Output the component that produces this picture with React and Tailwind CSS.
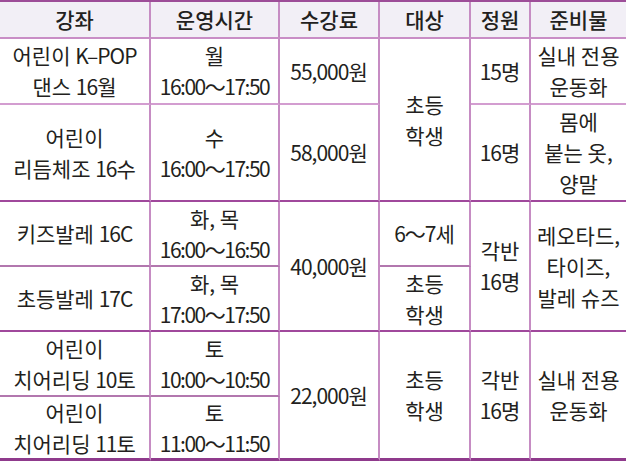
import React from 'react';

const FONT = { fontFamily: '"Noto Sans CJK KR", "Noto Sans", sans-serif' };

// line colours taken from the print scan
const V = 'border-r-2 border-r-[#c68cc3]';
const B_LIGHT = 'border-b-2 border-b-[#d39dd0]';
const B_MID = 'border-b-2 border-b-[#b277ae]';
const B_DARK = 'border-b-2 border-b-[#a0489c]';
const B_END = 'border-b-[3px] border-b-[#8f3a8c]';

const Cell = ({ children, className = '', last = false }) => (
  <div
    className={`flex items-center justify-center text-center leading-[31px] ${last ? '' : V} ${className}`}
  >
    <div>{children}</div>
  </div>
);

const Num = ({ children }) => <span className="tracking-[-1px]">{children}</span>;

const Time = ({ day, time }) => (
  <>
    {day}
    <br />
    <span className="tracking-[-1.5px]">{time}</span>
  </>
);

export default function App() {
  const headers = ['강좌', '운영시간', '수강료', '대상', '정원', '준비물'];

  return (
    <div className="w-[626px] h-[461px] bg-white overflow-hidden" style={FONT}>
      <div className="grid grid-cols-[151px_129px_100px_91px_60px_95px] grid-rows-[37px_66px_97px_65px_65px_65px_64px] border-t-2 border-t-[#9d4d98] text-[21px] text-[#231f20]">
        {headers.map((h, i) => (
          <Cell
            key={h}
            last={i === headers.length - 1}
            className="bg-[#f2eff6] font-medium border-b-2 border-b-[#c98ec6]"
          >
            {h}
          </Cell>
        ))}

        {/* row 1 */}
        <Cell className={B_LIGHT}>어린이 <Num>K–POP</Num><br />댄스 <Num>16</Num>월</Cell>
        <Cell className={B_LIGHT}><Time day="월" time="16:00～17:50" /></Cell>
        <Cell className={B_LIGHT}><Num>55,000</Num>원</Cell>
        <Cell className={`${B_DARK} row-span-2`}>초등<br />학생</Cell>
        <Cell className={B_LIGHT}><Num>15</Num>명</Cell>
        <Cell last className={B_LIGHT}>실내 전용<br />운동화</Cell>

        {/* row 2 */}
        <Cell className={B_DARK}>어린이<br />리듬체조 <Num>16</Num>수</Cell>
        <Cell className={B_DARK}><Time day="수" time="16:00～17:50" /></Cell>
        <Cell className={B_DARK}><Num>58,000</Num>원</Cell>
        <Cell className={B_DARK}><Num>16</Num>명</Cell>
        <Cell last className={B_DARK}>몸에<br />붙는 옷,<br />양말</Cell>

        {/* row 3 */}
        <Cell className={B_MID}>키즈발레 <Num>16C</Num></Cell>
        <Cell className={B_MID}><Time day="화, 목" time="16:00～16:50" /></Cell>
        <Cell className={`${B_DARK} row-span-2`}><Num>40,000</Num>원</Cell>
        <Cell className={B_MID}><Num>6～7</Num>세</Cell>
        <Cell className={`${B_DARK} row-span-2`}>각반<br /><Num>16</Num>명</Cell>
        <Cell last className={`${B_DARK} row-span-2`}>레오타드,<br />타이즈,<br />발레 슈즈</Cell>

        {/* row 4 */}
        <Cell className={B_DARK}>초등발레 <Num>17C</Num></Cell>
        <Cell className={B_DARK}><Time day="화, 목" time="17:00～17:50" /></Cell>
        <Cell className={B_DARK}>초등<br />학생</Cell>

        {/* row 5 */}
        <Cell className={B_MID}>어린이<br />치어리딩 <Num>10</Num>토</Cell>
        <Cell className={B_MID}><Time day="토" time="10:00～10:50" /></Cell>
        <Cell className={`${B_END} row-span-2`}><Num>22,000</Num>원</Cell>
        <Cell className={`${B_END} row-span-2`}>초등<br />학생</Cell>
        <Cell className={`${B_END} row-span-2`}>각반<br /><Num>16</Num>명</Cell>
        <Cell last className={`${B_END} row-span-2`}>실내 전용<br />운동화</Cell>

        {/* row 6 */}
        <Cell className={B_END}>어린이<br />치어리딩 <Num>11</Num>토</Cell>
        <Cell className={B_END}><Time day="토" time="11:00～11:50" /></Cell>
      </div>
    </div>
  );
}
